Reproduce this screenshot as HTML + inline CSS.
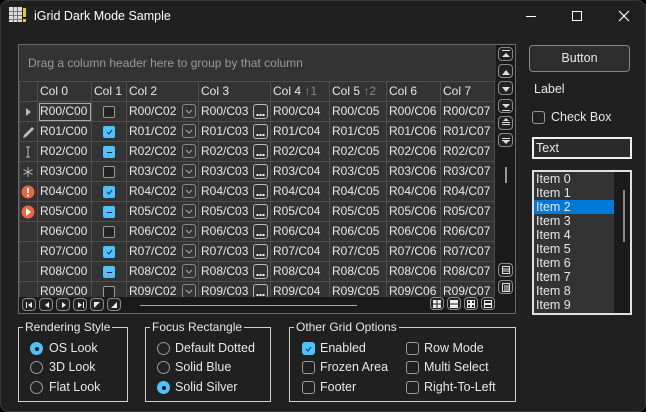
<!DOCTYPE html>
<html><head><meta charset="utf-8"><style>
*{box-sizing:border-box;margin:0;padding:0}
body{width:646px;height:412px;background:#000;overflow:hidden;font-family:"Liberation Sans",sans-serif;font-size:12px;color:#e8e8e8}
#win{position:absolute;left:0;top:0;width:646px;height:412px;background:#202020;border:1px solid #3a3a3a;border-radius:8px;overflow:hidden}
.a{position:absolute}
#grid{position:absolute;left:17px;top:43px;width:498px;height:270px;border:1px solid #6a6a6a;background:#1a1a1a;overflow:hidden}
#grp{position:absolute;left:0;top:0;width:477px;height:37px;background:#333;color:#9a9a9a;font-size:12px;padding:11px 0 0 9px}
table{position:absolute;left:0;top:36px;border-collapse:collapse;table-layout:fixed;background:#333}
tr{height:20px}
td{height:20px;line-height:17px;border:1px solid #4e4e4e;padding:0 0 0 2px;white-space:nowrap;overflow:hidden;color:#e8e8e8;font-size:12px;position:relative}
td.h{padding:0;line-height:0}
.cb{display:inline-block;width:12px;height:12px;border:1px solid #999;border-radius:2px;background:#222;vertical-align:middle;position:relative}
.cb.on{background:#4cc2ff;border-color:#4cc2ff}
.dd{position:absolute;right:2px;top:2px;width:14px;height:14px;border:1px solid #8a8a8a;border-radius:3px;line-height:0}
.el{position:absolute;right:2px;top:2px;width:15px;height:15px;border:1px solid #bbb;border-radius:3px;line-height:0}
.sb{position:absolute;width:15px;height:14px;border:1px solid #8a8a8a;border-radius:4px;background:#222}
.nb{position:absolute;top:2px;width:14px;height:13px;border:1px solid #8a8a8a;border-radius:4px;background:#222}
.rb{position:absolute;width:13px;height:13px;border:1px solid #999;border-radius:50%;background:#222}
.rb.on{background:#4cc2ff;border-color:#4cc2ff}
.rb.on:after{content:"";position:absolute;left:3.5px;top:3.5px;width:4px;height:4px;border-radius:50%;background:#111}
fieldset{position:absolute;border:1px solid #d0d0d0;padding:0}
legend{margin-left:4px;padding:0 2px;font-size:12px;color:#e8e8e8;line-height:12px}
.lbl{position:absolute;font-size:12.5px;color:#e8e8e8}
.ck{position:absolute;width:13px;height:13px;border:1px solid #999;border-radius:3px}
.ck.on{background:#4cc2ff;border-color:#4cc2ff}
</style></head><body><div id="win">
<svg class="a" style="left:8px;top:6px" width="18" height="16"><rect x="0" y="0" width="13" height="15" fill="#ddd"/><g stroke="#777" stroke-width="1"><line x1="0" y1="4.5" x2="13" y2="4.5"/><line x1="0" y1="8.5" x2="13" y2="8.5"/><line x1="0" y1="12.5" x2="13" y2="12.5"/><line x1="4.5" y1="0" x2="4.5" y2="15"/><line x1="8.5" y1="0" x2="8.5" y2="15"/></g><rect x="14" y="1" width="3" height="9" fill="#e8d000"/><rect x="14" y="12" width="3" height="3" fill="#e8d000"/></svg>
<div class="a" style="left:33px;top:8px;font-size:12.5px;color:#fff">iGrid Dark Mode Sample</div>
<div class="a" style="left:525px;top:15px;width:10px;height:1px;background:#fff"></div>
<div class="a" style="left:571px;top:10px;width:10px;height:10px;border:1px solid #fff"></div>
<svg class="a" style="left:617px;top:9px" width="12" height="12"><path d="M1 1L11 11M11 1L1 11" stroke="#fff" stroke-width="1.2"/></svg>

<div id="grid">
<div id="grp">Drag a column header here to group by that column</div>
<table>
<colgroup><col style="width:18px"><col style="width:54px"><col style="width:35px"><col style="width:72px"><col style="width:72px"><col style="width:59px"><col style="width:57px"><col style="width:54px"><col style="width:54px"></colgroup>
<tr><td class="h"></td><td>Col 0</td><td>Col 1</td><td>Col 2</td><td>Col 3</td><td>Col 4 <span style="color:#888">↑1</span></td><td>Col 5 <span style="color:#888">↑2</span></td><td>Col 6</td><td>Col 7</td></tr>
<tr><td class="h"><svg width="16" height="18"><path d="M6 5L11 9L6 13Z" fill="#bbb"/></svg></td><td style="outline:1px solid #aaa;outline-offset:-2px">R00/C00</td><td style="text-align:center;padding:0"><span class="cb"></span></td><td>R00/C02<span class="dd"><svg width="12" height="12"><path d="M3 5L6 8L9 5" stroke="#aaa" fill="none"/></svg></span></td><td>R00/C03<span class="el"><svg width="13" height="13"><path d="M2.5 9h2v2h-2zM5.5 9h2v2h-2zM8.5 9h2v2h-2z" fill="#fff"/></svg></span></td><td>R00/C04</td><td>R00/C05</td><td>R00/C06</td><td>R00/C07</td></tr>
<tr><td class="h"><svg width="16" height="18"><path d="M3 15L4 12L12 4L14 6L6 14Z" fill="#bbb"/></svg></td><td>R01/C00</td><td style="text-align:center;padding:0"><span class="cb on"><svg width="10" height="10" style="position:absolute;left:0;top:0"><path d="M3 5L5 7L8 3" stroke="#124" fill="none"/></svg></span></td><td>R01/C02<span class="dd"><svg width="12" height="12"><path d="M3 5L6 8L9 5" stroke="#aaa" fill="none"/></svg></span></td><td>R01/C03<span class="el"><svg width="13" height="13"><path d="M2.5 9h2v2h-2zM5.5 9h2v2h-2zM8.5 9h2v2h-2z" fill="#fff"/></svg></span></td><td>R01/C04</td><td>R01/C05</td><td>R01/C06</td><td>R01/C07</td></tr>
<tr><td class="h"><svg width="16" height="18"><path d="M6 4H10M8 4V14M6 14H10" stroke="#bbb" fill="none"/></svg></td><td>R02/C00</td><td style="text-align:center;padding:0"><span class="cb on"><span style="position:absolute;left:3px;top:5px;width:5px;height:1px;background:#124"></span></span></td><td>R02/C02<span class="dd"><svg width="12" height="12"><path d="M3 5L6 8L9 5" stroke="#aaa" fill="none"/></svg></span></td><td>R02/C03<span class="el"><svg width="13" height="13"><path d="M2.5 9h2v2h-2zM5.5 9h2v2h-2zM8.5 9h2v2h-2z" fill="#fff"/></svg></span></td><td>R02/C04</td><td>R02/C05</td><td>R02/C06</td><td>R02/C07</td></tr>
<tr><td class="h"><svg width="16" height="18"><path d="M8 4V14M3.5 6.5L12.5 11.5M12.5 6.5L3.5 11.5" stroke="#bbb" fill="none"/></svg></td><td>R03/C00</td><td style="text-align:center;padding:0"><span class="cb"></span></td><td>R03/C02<span class="dd"><svg width="12" height="12"><path d="M3 5L6 8L9 5" stroke="#aaa" fill="none"/></svg></span></td><td>R03/C03<span class="el"><svg width="13" height="13"><path d="M2.5 9h2v2h-2zM5.5 9h2v2h-2zM8.5 9h2v2h-2z" fill="#fff"/></svg></span></td><td>R03/C04</td><td>R03/C05</td><td>R03/C06</td><td>R03/C07</td></tr>
<tr><td class="h"><svg width="16" height="18"><circle cx="8" cy="9" r="6.5" fill="#f0643c"/><path d="M8 5V10" stroke="#fff" stroke-width="2"/><rect x="7" y="11.5" width="2" height="2" fill="#fff"/></svg></td><td>R04/C00</td><td style="text-align:center;padding:0"><span class="cb on"><svg width="10" height="10" style="position:absolute;left:0;top:0"><path d="M3 5L5 7L8 3" stroke="#124" fill="none"/></svg></span></td><td>R04/C02<span class="dd"><svg width="12" height="12"><path d="M3 5L6 8L9 5" stroke="#aaa" fill="none"/></svg></span></td><td>R04/C03<span class="el"><svg width="13" height="13"><path d="M2.5 9h2v2h-2zM5.5 9h2v2h-2zM8.5 9h2v2h-2z" fill="#fff"/></svg></span></td><td>R04/C04</td><td>R04/C05</td><td>R04/C06</td><td>R04/C07</td></tr>
<tr><td class="h"><svg width="16" height="18"><circle cx="8" cy="9" r="6.5" fill="#f0643c"/><path d="M6 5L11 9L6 13Z" fill="#fff"/></svg></td><td>R05/C00</td><td style="text-align:center;padding:0"><span class="cb on"><span style="position:absolute;left:3px;top:5px;width:5px;height:1px;background:#124"></span></span></td><td>R05/C02<span class="dd"><svg width="12" height="12"><path d="M3 5L6 8L9 5" stroke="#aaa" fill="none"/></svg></span></td><td>R05/C03<span class="el"><svg width="13" height="13"><path d="M2.5 9h2v2h-2zM5.5 9h2v2h-2zM8.5 9h2v2h-2z" fill="#fff"/></svg></span></td><td>R05/C04</td><td>R05/C05</td><td>R05/C06</td><td>R05/C07</td></tr>
<tr><td class="h"></td><td>R06/C00</td><td style="text-align:center;padding:0"><span class="cb"></span></td><td>R06/C02<span class="dd"><svg width="12" height="12"><path d="M3 5L6 8L9 5" stroke="#aaa" fill="none"/></svg></span></td><td>R06/C03<span class="el"><svg width="13" height="13"><path d="M2.5 9h2v2h-2zM5.5 9h2v2h-2zM8.5 9h2v2h-2z" fill="#fff"/></svg></span></td><td>R06/C04</td><td>R06/C05</td><td>R06/C06</td><td>R06/C07</td></tr>
<tr><td class="h"></td><td>R07/C00</td><td style="text-align:center;padding:0"><span class="cb on"><svg width="10" height="10" style="position:absolute;left:0;top:0"><path d="M3 5L5 7L8 3" stroke="#124" fill="none"/></svg></span></td><td>R07/C02<span class="dd"><svg width="12" height="12"><path d="M3 5L6 8L9 5" stroke="#aaa" fill="none"/></svg></span></td><td>R07/C03<span class="el"><svg width="13" height="13"><path d="M2.5 9h2v2h-2zM5.5 9h2v2h-2zM8.5 9h2v2h-2z" fill="#fff"/></svg></span></td><td>R07/C04</td><td>R07/C05</td><td>R07/C06</td><td>R07/C07</td></tr>
<tr><td class="h"></td><td>R08/C00</td><td style="text-align:center;padding:0"><span class="cb on"><span style="position:absolute;left:3px;top:5px;width:5px;height:1px;background:#124"></span></span></td><td>R08/C02<span class="dd"><svg width="12" height="12"><path d="M3 5L6 8L9 5" stroke="#aaa" fill="none"/></svg></span></td><td>R08/C03<span class="el"><svg width="13" height="13"><path d="M2.5 9h2v2h-2zM5.5 9h2v2h-2zM8.5 9h2v2h-2z" fill="#fff"/></svg></span></td><td>R08/C04</td><td>R08/C05</td><td>R08/C06</td><td>R08/C07</td></tr>
<tr><td class="h"></td><td>R09/C00</td><td style="text-align:center;padding:0"><span class="cb"></span></td><td>R09/C02<span class="dd"><svg width="12" height="12"><path d="M3 5L6 8L9 5" stroke="#aaa" fill="none"/></svg></span></td><td>R09/C03<span class="el"><svg width="13" height="13"><path d="M2.5 9h2v2h-2zM5.5 9h2v2h-2zM8.5 9h2v2h-2z" fill="#fff"/></svg></span></td><td>R09/C04</td><td>R09/C05</td><td>R09/C06</td><td>R09/C07</td></tr>
</table>
<div class="a" style="left:0;top:252px;width:477px;height:17px;background:#1a1a1a"></div>
<div class="a" style="left:477px;top:0;width:20px;height:269px;background:#1a1a1a"></div>
<div class="sb" style="left:479px;top:2px"></div><div class="sb" style="left:479px;top:19px"></div><div class="sb" style="left:479px;top:36px"></div><div class="sb" style="left:479px;top:54px"></div><div class="sb" style="left:479px;top:71px"></div><div class="sb" style="left:479px;top:88px"></div>
<svg class="a" style="left:479px;top:2px" width="16" height="102" fill="#ddd"><rect x="4" y="3" width="8" height="1"/><path d="M4 10L8 6L12 10Z"/><path d="M4 28L8 23L12 28Z"/><path d="M4 40L8 45L12 40Z"/><path d="M4 57L8 61L12 57Z"/><rect x="4" y="63" width="8" height="1"/><path d="M5 74L8 71L11 74Z"/><rect x="4" y="75" width="8" height="1"/><rect x="4" y="77" width="8" height="1"/><rect x="4" y="91" width="8" height="1"/><rect x="4" y="93" width="8" height="1"/><path d="M5 94L8 97L11 94Z"/></svg>
<div class="a" style="left:486px;top:122px;width:2px;height:16px;background:#999"></div>
<div class="sb" style="left:479px;top:218px"></div><div class="sb" style="left:479px;top:235px"></div>
<svg class="a" style="left:479px;top:218px" width="16" height="32" fill="none" stroke="#ddd"><rect x="4.5" y="3.5" width="7" height="7"/><path d="M5 6H11M5 8H11"/><rect x="4.5" y="20.5" width="7" height="8"/><path d="M6 23H11M6 25H11M6 27H11"/></svg>
<div class="nb" style="left:3px;top:253px"></div><div class="nb" style="left:20px;top:253px"></div><div class="nb" style="left:37px;top:253px"></div><div class="nb" style="left:54px;top:253px"></div><div class="nb" style="left:71px;top:253px"></div><div class="nb" style="left:88px;top:253px"></div>
<svg class="a" style="left:3px;top:253px" width="100" height="14" fill="#eee"><rect x="4" y="4" width="1" height="6"/><path d="M10 4L6 7L10 10Z"/><path d="M27 4L23 7L27 10Z"/><path d="M40 4L44 7L40 10Z"/><path d="M56 4L60 7L56 10Z"/><rect x="61" y="4" width="1" height="6"/><path d="M72 4H78L72 10Z"/><path d="M95 4V10H89Z"/></svg>
<div class="a" style="left:121px;top:260px;width:217px;height:1px;background:#aaa"></div>
<div class="nb" style="left:411px;top:252px"></div><div class="nb" style="left:428px;top:252px"></div><div class="nb" style="left:445px;top:252px"></div><div class="nb" style="left:462px;top:252px"></div>
<svg class="a" style="left:411px;top:252px" width="66" height="15"><g fill="#eee"><rect x="3" y="3" width="3.5" height="3.5"/><rect x="7.5" y="3" width="3.5" height="3.5"/><rect x="3" y="7.5" width="3.5" height="3.5"/><rect x="7.5" y="7.5" width="3.5" height="3.5"/><rect x="20" y="3" width="8" height="3.5"/><rect x="20" y="7.5" width="8" height="3.5"/></g><g fill="none" stroke="#eee"><rect x="37.5" y="3.5" width="3" height="3"/><rect x="41.5" y="3.5" width="3" height="3"/><rect x="37.5" y="7.5" width="3" height="3"/><rect x="41.5" y="7.5" width="3" height="3"/><rect x="54.5" y="3.5" width="7" height="3"/><rect x="54.5" y="7.5" width="7" height="3"/></g></svg>
</div>

<div class="a" style="left:528px;top:44px;width:101px;height:27px;border:1px solid #888;border-radius:4px;background:#2d2d2d;text-align:center;line-height:25px;font-size:12.5px">Button</div>
<div class="lbl" style="left:533px;top:81px">Label</div>
<div class="ck" style="left:531px;top:110px"></div>
<div class="lbl" style="left:550px;top:109px">Check Box</div>
<div class="a" style="left:531px;top:136px;width:100px;height:22px;border:2px solid #f0f0f0;background:#2a2a2a;padding:2px 0 0 2px;font-size:12.5px">Text</div>
<div class="a" style="left:531px;top:169px;width:100px;height:145px;border:2px solid #e0e0e0;background:#1a1a1a;overflow:hidden">
<div class="a" style="left:0;top:0;width:80px;height:141px;background:#333"></div>
<div class="a" style="left:0;top:28px;width:80px;height:14px;background:#0078d7"></div>
<div class="a" style="left:89px;top:18px;width:2px;height:52px;background:#888"></div>
<div class="a" style="left:2px;top:0;font-size:12.5px;line-height:14px">Item 0<br>Item 1<br>Item 2<br>Item 3<br>Item 4<br>Item 5<br>Item 6<br>Item 7<br>Item 8<br>Item 9</div>
</div>

<fieldset style="left:17px;top:320px;width:110px;height:81px"><legend>Rendering Style</legend></fieldset>
<div class="rb on" style="left:29px;top:341px"></div><div class="lbl" style="left:48px;top:340px">OS Look</div>
<div class="rb" style="left:29px;top:360px"></div><div class="lbl" style="left:48px;top:359px">3D Look</div>
<div class="rb" style="left:29px;top:380px"></div><div class="lbl" style="left:48px;top:379px">Flat Look</div>
<fieldset style="left:144px;top:320px;width:126px;height:81px"><legend>Focus Rectangle</legend></fieldset>
<div class="rb" style="left:156px;top:341px"></div><div class="lbl" style="left:174px;top:340px">Default Dotted</div>
<div class="rb" style="left:156px;top:360px"></div><div class="lbl" style="left:174px;top:359px">Solid Blue</div>
<div class="rb on" style="left:156px;top:380px"></div><div class="lbl" style="left:174px;top:379px">Solid Silver</div>
<fieldset style="left:288px;top:320px;width:227px;height:81px"><legend>Other Grid Options</legend></fieldset>
<div class="ck on" style="left:301px;top:341px"><svg width="11" height="11" style="position:absolute;left:0;top:0"><path d="M3 6L5 8L8 4" stroke="#124" fill="none"/></svg></div><div class="lbl" style="left:319px;top:340px">Enabled</div>
<div class="ck" style="left:301px;top:360px"></div><div class="lbl" style="left:319px;top:359px">Frozen Area</div>
<div class="ck" style="left:301px;top:380px"></div><div class="lbl" style="left:319px;top:379px">Footer</div>
<div class="ck" style="left:405px;top:341px"></div><div class="lbl" style="left:423px;top:340px">Row Mode</div>
<div class="ck" style="left:405px;top:360px"></div><div class="lbl" style="left:423px;top:359px">Multi Select</div>
<div class="ck" style="left:405px;top:380px"></div><div class="lbl" style="left:423px;top:379px">Right-To-Left</div>
</div></body></html>
